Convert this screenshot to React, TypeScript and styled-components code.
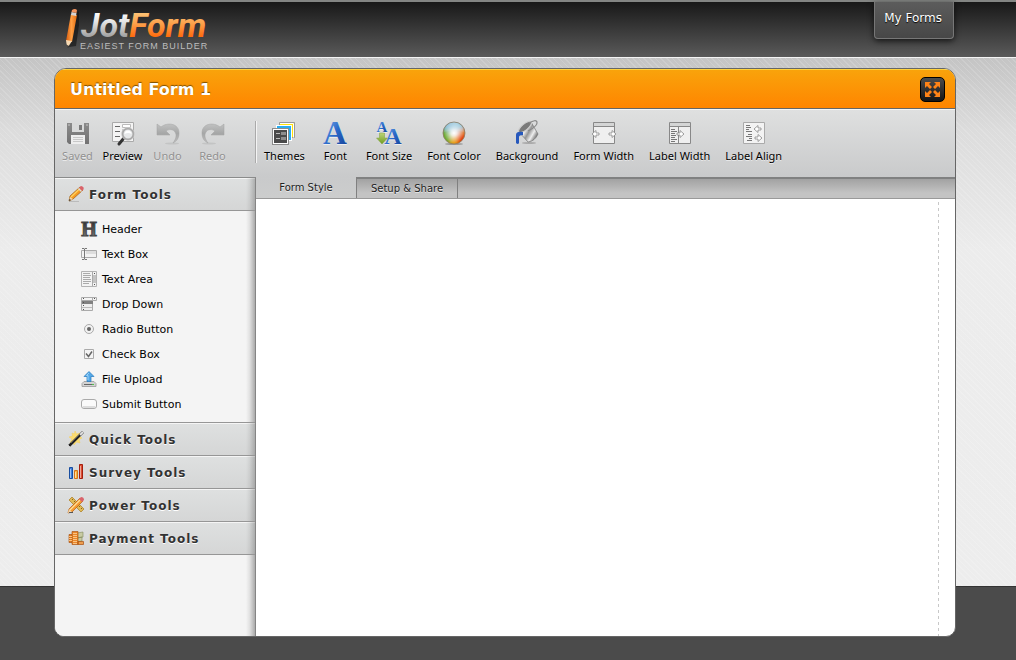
import React from "react";
import styled, { createGlobalStyle, css } from "styled-components";

const GlobalStyle = createGlobalStyle`
  *, *::before, *::after { box-sizing: border-box; }
  body {
    margin: 0;
    background: #4b4b4b;
    font-family: "DejaVu Sans", Verdana, sans-serif;
    font-size: 11px;
    color: #000;
  }
  button { font: inherit; color: inherit; border: 0; padding: 0; background: none; cursor: pointer; }
  h1, h2, ul { margin: 0; padding: 0; font: inherit; }
  ul { list-style: none; }
  svg { display: block; flex: none; overflow: visible; }
`;

const Page = styled.div`
  min-height: 100vh;
  padding-bottom: 23px;
  display: flex;
  flex-direction: column;
  background:
    linear-gradient(#333, #333) 0 calc(100% - 73px) / 100% 1px no-repeat,
    repeating-linear-gradient(45deg, rgba(255, 255, 255, 0.14) 0 1px, transparent 1px 4px) 0 0 / 100% calc(100% - 74px) no-repeat,
    linear-gradient(#c4c4c4 57px, #dcdcdc 130px, #ececec 250px, #ededed) 0 0 / 100% calc(100% - 74px) no-repeat,
    #4b4b4b;
`;

const TopBar = styled.header`
  height: 58px;
  padding: 0 62px 0 64px;
  display: flex;
  justify-content: space-between;
  align-items: flex-start;
  border-top: 2px solid #838583;
  border-bottom: 1px solid #f4f4f4;
  background: linear-gradient(#181818, #5a5a5a);
`;

const LogoLink = styled.a`
  display: block;
  padding-top: 4px;
`;

const AccountLink = styled.a`
  height: 37px;
  padding: 0 11px 5px 9px;
  display: flex;
  align-items: center;
  border: 1px solid #777;
  border-top: 0;
  border-radius: 0 0 4px 4px;
  background: linear-gradient(#5c5c5c, #474747);
  box-shadow: 0 2px 6px rgba(0, 0, 0, 0.7);
  color: #fff;
  font-size: 12px;
  line-height: 16px;
  text-decoration: none;
  text-shadow: 0 1px 1px #000;
`;

const Builder = styled.main`
  flex: 1;
  margin: 10px 60px 0 54px;
  display: flex;
  flex-direction: column;
  overflow: hidden;
  border: 1px solid #666;
  border-radius: 12px 12px 10px 10px;
  background: #fff;
`;

const TitleBar = styled.div`
  height: 40px;
  padding: 0 10px 0 15px;
  display: flex;
  align-items: center;
  justify-content: space-between;
  border-top: 1px solid #ffd23c;
  border-bottom: 1px solid #666;
  background: linear-gradient(#f9a30b, #ff8500);
`;

const FormTitle = styled.h1`
  padding-top: 2px;
  color: #fff;
  font-size: 16px;
  font-weight: bold;
  line-height: 20px;
  text-shadow: 0 -1px 1px rgba(90, 60, 0, 0.8);
`;

const ExpandButton = styled.button`
  width: 25px;
  height: 25px;
  display: grid;
  place-items: center;
  border: 1px solid #000;
  border-radius: 5px;
  background: linear-gradient(#4c4c4c, #151515);
`;

const Toolbar = styled.div`
  height: 68px;
  padding-top: 11px;
  display: flex;
  align-items: flex-start;
  border-top: 1px solid #f6f6f6;
  background: linear-gradient(#dfe0e0, #c9cacb);
`;

const ToolGroup = styled.div<{ $divided?: boolean }>`
  height: 42px;
  display: flex;
  gap: 1px;
  ${(p) =>
    p.$divided &&
    css`
      flex: none;
      width: 201px;
      gap: 0;
      margin-right: 1px;
      border-right: 1px solid #aaa;
      box-shadow: 1px 0 #f4f4f4;
    `}
`;

const ToolButton = styled.button<{ $muted?: boolean }>`
  min-width: 45px;
  padding: 0 7px;
  display: flex;
  flex-direction: column;
  align-items: center;
  gap: 3px;
  white-space: nowrap;
  font-family: "Noto Sans", "Open Sans", sans-serif;
  line-height: 15px;
  color: ${(p) => (p.$muted ? "#919191" : "#000")};
  text-shadow: 0 1px 0 rgba(255, 255, 255, 0.6);
`;

const QuickButton = styled(ToolButton)`
  width: 45px;
  padding: 0;
`;

const Workspace = styled.div`
  flex: 1;
  display: flex;
`;

const Sidebar = styled.nav`
  flex: none;
  width: 201px;
  border-top: 1px solid #8a8b8b;
  border-right: 1px solid #858585;
  background:
    linear-gradient(90deg, transparent, rgba(0, 0, 0, 0.08) 40%, rgba(0, 0, 0, 0.3)) 100% 0 / 9px 100% no-repeat,
    #f4f4f4;
`;

const SectionButton = styled.button`
  width: 100%;
  height: 33px;
  padding: 2px 13px 0;
  display: flex;
  align-items: center;
  gap: 5px;
  border-bottom: 1px solid #969696;
  background:
    linear-gradient(90deg, transparent, rgba(0, 0, 0, 0.06) 40%, rgba(0, 0, 0, 0.22)) 100% 0 / 9px 100% no-repeat,
    linear-gradient(#f5f5f5 1px, #dee0e0 1px, #d5d6d6);
  color: #333;
  font-size: 12px;
  font-weight: bold;
  line-height: 16px;
  letter-spacing: 1px;
  text-shadow: 0 1px 0 #fff;

  svg { margin-bottom: 2px; }
`;

const ToolList = styled.ul`
  padding: 6px 0 5px;
  border-bottom: 1px solid #969696;
`;

const FieldButton = styled.button`
  width: 100%;
  height: 25px;
  padding: 0 26px;
  display: flex;
  align-items: center;
  gap: 5px;
  line-height: 15px;

  svg { margin-bottom: 1px; }
`;

const Editor = styled.section`
  flex: 1;
  min-width: 0;
  display: flex;
  flex-direction: column;
`;

const TabStrip = styled.div`
  height: 22px;
  display: flex;
  background: linear-gradient(#808181 2px, #a2a2a2 2px, #c3c3c3 16px);
  border-bottom: 1px solid #999;
`;

const Tab = styled.button<{ $active?: boolean }>`
  padding: 0 13px;
  min-width: 100px;
  font-size: 10px;
  line-height: 18px;
  text-shadow: 0 1px 0 rgba(255, 255, 255, 0.6);
  color: #222;
  ${(p) =>
    p.$active
      ? css`
          background: linear-gradient(#c9cacb, #cccdcd);
        `
      : css`
          min-width: 102px;
          padding-top: 2px;
          border-left: 1px solid #808080;
          border-right: 1px solid #808080;
        `}
`;

const FormCanvas = styled.div`
  flex: 1;
  min-height: 200px;
  margin: 3px 16px 0 0;
  background: repeating-linear-gradient(#c8c8c8 0 3px, #fff 3px 6px) 100% 0 / 1px 100% no-repeat;
`;

const Logo = () => (
  <svg width="146" height="46" viewBox="64 6 146 46" role="img" aria-label="JotForm, easiest form builder">
    <defs>
      <linearGradient id="silver" gradientUnits="userSpaceOnUse" x1="0" y1="12" x2="0" y2="37">
        <stop offset="0" stopColor="#fff" />
        <stop offset="0.4" stopColor="#e4e4e4" />
        <stop offset="1" stopColor="#9f9f9f" />
      </linearGradient>
      <linearGradient id="amber" gradientUnits="userSpaceOnUse" x1="0" y1="10" x2="0" y2="37">
        <stop offset="0" stopColor="#fdcb80" />
        <stop offset="0.5" stopColor="#fba14b" />
        <stop offset="1" stopColor="#ff6a0c" />
      </linearGradient>
      <linearGradient id="pencilBody" x1="0" x2="1">
        <stop offset="0" stopColor="#d95c0d" />
        <stop offset="0.5" stopColor="#ff9f43" />
        <stop offset="1" stopColor="#e06a10" />
      </linearGradient>
    </defs>
    <path d="M75 14l4-3v14l-3 21-7 1z" fill="#111" opacity="0.6" />
    <path d="M71 14l6 1-5 27-6-1z" fill="url(#pencilBody)" />
    <path d="M71.500 12l5 1-.5 3-5-1z" fill="#d5d5d5" />
    <path d="M72 10q3-2 5 0l-.5 3-5-1z" fill="#f2955f" />
    <path d="M66 40l6 1-4 6q-2-3-2-7z" fill="#f7d9b3" />
    <path d="M67 45l2 1-1 2z" fill="#222" />
    <text x="81" y="37" fontFamily="Roboto, sans-serif" fontSize="34" fontWeight="700" fontStyle="italic">
      <tspan fill="url(#silver)">Jot</tspan><tspan fill="url(#amber)">Form</tspan>
    </text>
    <text x="80" y="49" fontFamily="Liberation Sans, sans-serif" fontSize="9" letterSpacing="1" fill="#bdbdbd">
      EASIEST FORM BUILDER
    </text>
  </svg>
);

const Big = ({ children }: { children: React.ReactNode }) => (
  <svg width="24" height="24" viewBox="0 0 24 24" aria-hidden="true">{children}</svg>
);
const Small = ({ children }: { children: React.ReactNode }) => (
  <svg width="16" height="16" viewBox="0 0 16 16" aria-hidden="true">{children}</svg>
);

const ExpandIcon = () => (
  <svg width="17" height="17" viewBox="0 0 17 17" fill="#ff8316" aria-hidden="true">
    <path d="M1 1h6L5 3l3 3-2 2-3-3-2 2z" />
    <path d="M16 1h-6l2 2-3 3 2 2 3-3 2 2z" />
    <path d="M1 16h6l-2-2 3-3-2-2-3 3-2-2z" />
    <path d="M16 16h-6l2-2-3-3 2-2 3 3 2-2z" />
  </svg>
);

const SavedIcon = () => (
  <Big>
    <defs>
      <linearGradient id="disk" x1="0" y1="0" x2="0" y2="1">
        <stop offset="0" stopColor="#8b8b8b" />
        <stop offset="1" stopColor="#727272" />
      </linearGradient>
    </defs>
    <path d="M1 2h22v21H3l-2-2z" fill="url(#disk)" />
    <path d="M6 2h12v9H6z" fill="#d9dada" />
    <path d="M13 4h3v5h-3z" fill="#7b7b7b" />
    <path d="M5 14h14v9H5z" fill="#eee" />
    <path d="M7 16.5h10M7 18.5h10M7 20.5h10" stroke="#c8c8c8" />
    <path d="M2 3h2v2H2zM20 3h2v2h-2z" fill="#a7a7a7" />
  </Big>
);

const PreviewIcon = () => (
  <Big>
    <path d="M1.5 1.5h21v19h-21z" fill="#f4f4f4" stroke="#aaa" />
    <path d="M4 5.5h5M4 10.5h5M4 15.5h5" stroke="#666" />
    <path d="M11.5 3.500h8v3h-8zM11.5 8.500h8v3h-8z" fill="#fff" stroke="#bbb" />
    <path d="M13 17l-5 6" stroke="#333" strokeWidth="3" strokeLinecap="round" />
    <circle cx="17" cy="13" r="5.5" fill="#e4e7e8" fillOpacity="0.9" stroke="#a8a8a8" strokeWidth="2" />
    <path d="M13.5 13a3.5 3.5 0 0 1 7 0q-3-2-7 0z" fill="#fff" />
    <circle cx="17" cy="13" r="6.5" fill="none" stroke="#ddd" strokeWidth="0.5" />
  </Big>
);

const CurvedArrow = ({ flip }: { flip?: boolean }) => (
  <Big>
    <defs>
      <linearGradient id="curve" x1="0" y1="0" x2="0" y2="1">
        <stop offset="0" stopColor="#c0c1c1" />
        <stop offset="0.5" stopColor="#a6a7a7" />
        <stop offset="1" stopColor="#bdbdbd" />
      </linearGradient>
    </defs>
    <g transform={flip ? "translate(24 0) scale(-1 1)" : undefined}>
      <ellipse cx="16" cy="22.5" rx="7" ry="1" fill="#c3c4c4" />
      <path d="M1 3l4 3c6-5 18-4 18 6 0 5-2 8-6 10 3-4 4-8 2-11-2-3-6-3-9-1l4 4H1z" fill="url(#curve)" stroke="#a3a3a3" strokeWidth="0.5" />
    </g>
  </Big>
);

const ThemesIcon = () => (
  <Big>
    <path d="M7.5 1.5h15v15h-15z" fill="#ffe30a" stroke="#999" />
    <path d="M8 2.5h13.5v14" fill="none" stroke="#fff" />
    <path d="M8 4h12v12" fill="none" stroke="#ffe30a" strokeWidth="2" />
    <path d="M4 4h16v16H4z" fill="#fff" />
    <path d="M5 5h14v14H5z" fill="#29adf0" />
    <path d="M0 7h17v17H0z" fill="#8c8c8c" />
    <path d="M1 8h15v15H1z" fill="#fff" />
    <path d="M2 9h13v13H2z" fill="#4a4a4a" />
    <path d="M4 12.5h4M4 17.5h4" stroke="#bbb" />
    <path d="M9 11h5v3H9zM9 16h5v3H9z" fill="#8d8d8d" />
  </Big>
);

const LETTER_A = { fontFamily: "Liberation Serif, serif", fontWeight: 700, textAnchor: "middle" as const, fill: "url(#blue)" };

const FontIcon = () => (
  <Big>
    <defs>
      <linearGradient id="blue" x1="0" y1="0" x2="1" y2="1">
        <stop offset="0" stopColor="#8bb9ef" />
        <stop offset="0.5" stopColor="#2b69c9" />
        <stop offset="1" stopColor="#123d92" />
      </linearGradient>
    </defs>
    <text x="12" y="23" fontSize="33" {...LETTER_A}>A</text>
  </Big>
);

const FontSizeIcon = () => (
  <Big>
    <defs>
      <linearGradient id="leaf" x1="0" y1="0" x2="0" y2="1">
        <stop offset="0" stopColor="#bdd477" />
        <stop offset="1" stopColor="#6f9c20" />
      </linearGradient>
    </defs>
    <text x="5" y="11" fontSize="15" {...LETTER_A}>A</text>
    <text x="16" y="23" fontSize="24" {...LETTER_A}>A</text>
    <path d="M2.500 12h5v5h3l-5.500 6-5.500-6h3z" fill="url(#leaf)" stroke="#83a23f" strokeWidth="0.5" />
  </Big>
);

const FontColorIcon = () => (
  <Big>
    <defs>
      <radialGradient id="glow">
        <stop offset="0" stopColor="#fff" />
        <stop offset="0.3" stopColor="#fff" stopOpacity="0.8" />
        <stop offset="1" stopColor="#fff" stopOpacity="0" />
      </radialGradient>
      <linearGradient id="gloss" x1="0" y1="0" x2="0" y2="1">
        <stop offset="0" stopColor="#fff" stopOpacity="0.5" />
        <stop offset="1" stopColor="#fff" stopOpacity="0.1" />
      </linearGradient>
      <filter id="blend"><feGaussianBlur stdDeviation="2" /></filter>
      <clipPath id="disc"><circle cx="12" cy="12" r="11" /></clipPath>
    </defs>
    <ellipse cx="12" cy="23" rx="9" ry="1" fill="#999" />
    <g clipPath="url(#disc)">
      <g filter="url(#blend)">
        <path d="M12 12L-4 6V-4h16z" fill="#5ea4c7" />
        <path d="M12 12V-4h16v9z" fill="#6fb2ce" />
        <path d="M12 12l16-8v12z" fill="#e08a35" />
        <path d="M12 12l16 2v14H16z" fill="#e2400b" />
        <path d="M12 12l6 16H4z" fill="#eba013" />
        <path d="M12 12L5 28h-9V6z" fill="#6eaa31" />
      </g>
    </g>
    <circle cx="12" cy="12" r="10" fill="url(#glow)" />
    <path d="M2 11a10 10 0 0 1 20 0q-10-3-20 0z" fill="url(#gloss)" />
    <circle cx="12" cy="12" r="11" fill="none" stroke="#8c7b63" strokeWidth="0.8" />
  </Big>
);

const BackgroundIcon = () => (
  <Big>
    <defs>
      <linearGradient id="metal" x1="0" y1="0" x2="1" y2="0.6">
        <stop offset="0" stopColor="#777" />
        <stop offset="0.4" stopColor="#fafafa" />
        <stop offset="0.6" stopColor="#959595" />
        <stop offset="0.8" stopColor="#eee" />
        <stop offset="1" stopColor="#777" />
      </linearGradient>
    </defs>
    <ellipse cx="14" cy="22" rx="7" ry="1" fill="#aaa" />
    <path d="M4 11L16 1l7 12q-3 7-10 8z" fill="url(#metal)" stroke="#777" strokeWidth="0.7" />
    <ellipse cx="10" cy="6" rx="8" ry="3" transform="rotate(-40 10 6)" fill="#7a7a7a" stroke="#ccc" />
    <path d="M8 11q-7-1-7 3v8q2 2 3 0v-6q0-2 4-2z" fill="#2758bc" />
    <path d="M14 2q7-4 8-1 1 4-9 9" fill="none" stroke="#888" strokeWidth="1.2" />
  </Big>
);

const Pointer = ({ place }: { place: string }) => (
  <path d="M0-1h3v-2.5L7 0 3 3.5V1H0z" transform={place} fill="#fff" stroke="#888" strokeWidth="0.8" />
);

const WindowFrame = () => (
  <>
    <path d="M1.5 1.5h21v21h-21z" fill="#efefef" stroke="#888" />
    <path d="M2 2h20v3H2z" fill="#d4d5d5" />
    <path d="M2 5.500h20" stroke="#888" />
  </>
);

const FormWidthIcon = () => (
  <Big>
    <WindowFrame />
    <Pointer place="translate(17 13)" />
    <Pointer place="translate(7 13) scale(-1 1)" />
  </Big>
);

const LabelWidthIcon = () => (
  <Big>
    <WindowFrame />
    <path d="M10.5 6v16" stroke="#888" />
    <path d="M3 8.500h4M3 10.500h6M3 12.500h4M3 14.500h5M3 16.500h4M3 18.500h6M3 20.500h4" stroke="#777" />
    <Pointer place="translate(9 13)" />
  </Big>
);

const LabelAlignIcon = () => (
  <Big>
    <path d="M1.5 1.5h21v21h-21z" fill="#f3f3f3" stroke="#aaa" />
    <path d="M4 4.500h4M4 6.500h5M4 8.500h3M4 10.500h6M6 13.500h4M4 15.500h6M7 17.500h3M5 19.500h5" stroke="#777" />
    <Pointer place="translate(19 8) scale(-1 1)" />
    <Pointer place="translate(13 17)" />
  </Big>
);

const PencilIcon = () => (
  <Small>
    <path d="M1 15.500h10" stroke="#bbb" />
    <path d="M1 15l1-5L12 1l3 3L5 13z" fill="#f59a22" stroke="#9a5b16" strokeWidth="0.7" />
    <path d="M3 11l9-8.500" stroke="#ffd25e" strokeWidth="1.3" />
    <path d="M1 15l1-4 3 2z" fill="#f4d6aa" />
    <path d="M1 15l.5-2L3 14z" fill="#222" />
    <path d="M11 2l3 3 1.5-1.5q1-2-1-3t-2.500.5z" fill="#d9636a" />
    <path d="M10.5 2.500l3 3" stroke="#ddd" strokeWidth="1.2" />
  </Small>
);

const HeaderIcon = () => (
  <Small>
    <defs>
      <linearGradient id="ink" x1="0" y1="0" x2="0" y2="1">
        <stop offset="0.2" stopColor="#333" />
        <stop offset="0.8" stopColor="#707070" />
      </linearGradient>
    </defs>
    <text x="8" y="15" textAnchor="middle" fontFamily="Liberation Serif, serif" fontSize="20" fontWeight="700" fill="url(#ink)" stroke="#444">
      H
    </text>
  </Small>
);

const TextBoxIcon = () => (
  <Small>
    <path d="M.5 4.500h15v7H.5z" fill="#f2f2f2" stroke="#aaa" />
    <path d="M5 5h10v3H5z" fill="#ddd" />
    <path d="M1 2.500h2l.5.5.5-.5h2M1 13.500h2l.5-.5.5.5h2M3.500 3v10" fill="none" stroke="#777" />
  </Small>
);

const TextAreaIcon = () => (
  <Small>
    <path d="M.5.5h15v15H.5z" fill="#f3f3f3" stroke="#b3b3b3" />
    <path d="M2 2.500h7M2 4.500h8M2 6.500h7M2 8.500h8M2 10.500h8M2 12.500h6" stroke="#aaa" />
    <path d="M11.5 1v14" stroke="#aaa" />
    <path d="M12 4h3v8h-3z" fill="#c4c4c4" />
    <path d="M13 2h1v1h-1zM13 13h1v1h-1z" fill="#555" />
  </Small>
);

const DropDownIcon = () => (
  <Small>
    <path d="M.5 1.500h15v3H.5z" fill="#f4f4f4" stroke="#aaa" />
    <path d="M11.5 1.500v3" stroke="#aaa" />
    <path d="M.5 4.500h11v10H.5z" fill="#eee" stroke="#aaa" />
    <path d="M1 5h11v3H1z" fill="#808080" />
    <path d="M1 11.500h10" stroke="#bbb" />
    <path d="M2 2h1v1H2zM2 6h1v1H2zM2 9h1v1H2zM2 13h1v1H2zM13 2h1v1h-1z" fill="#555" />
  </Small>
);

const RadioIcon = () => (
  <Small>
    <circle cx="8" cy="8" r="4.5" fill="#f2f2f2" stroke="#aaa" />
    <circle cx="8" cy="8" r="2" fill="#666" />
  </Small>
);

const CheckIcon = () => (
  <Small>
    <path d="M3.500 3.500h9v9h-9z" fill="#f4f4f4" stroke="#aaa" />
    <path d="M5 7.500l2.500 3L11 5.500" fill="none" stroke="#666" strokeWidth="1.5" />
  </Small>
);

const UploadIcon = () => (
  <Small>
    <path d="M3 10.500h10l2 2v3H1v-3z" fill="#d3d3d3" stroke="#999" strokeWidth="0.8" />
    <path d="M3 13.500h9" stroke="#666" />
    <path d="M11 13h2v1h-2z" fill="#4fc14b" />
    <path d="M8 .5l5 5h-3v5H6v-5H3z" fill="#53a8e8" stroke="#2479bd" strokeWidth="0.7" />
    <path d="M8 2L5.500 4.500H7V9" fill="none" stroke="#9bd1f6" />
  </Small>
);

const SubmitIcon = () => (
  <Small>
    <rect x="0.5" y="3.5" width="15" height="9" rx="2.5" fill="#fafafa" stroke="#aaa" />
    <path d="M2 11h12" stroke="#ddd" strokeWidth="2" />
  </Small>
);

const WandIcon = () => (
  <Small>
    <path d="M7 0l1.500 3 3.500-1-1 3 3 2-3 1.500 1 3.500-3.500-1L6 14l-1-3-3 .5L4 8 1 6l3.500-1L4 2l2.500 1z" fill="#fbdc70" stroke="#f4cf5b" strokeWidth="0.5" />
    <path d="M1 15L15 1" stroke="#222" strokeWidth="2.5" />
    <path d="M12 4l3-3" stroke="#e4e4e4" strokeWidth="2" />
    <path d="M0 14l2 2" stroke="#ccc" />
    <path d="M3 12l8-8" stroke="#888" strokeWidth="0.6" />
  </Small>
);

const ChartIcon = () => (
  <Small>
    <path d="M1.5 3.500h3v11h-3z" fill="#3f7fda" stroke="#184d9f" />
    <path d="M6.500 6.500h3v8h-3z" fill="#fcb53d" stroke="#d4731b" />
    <path d="M11.5.5h3v14h-3z" fill="#dc4e32" stroke="#a41f0f" />
    <path d="M2.500 5v9M7.500 8v6M12.5 2v12" stroke="#fff" strokeOpacity="0.5" />
  </Small>
);

const PowerIcon = () => (
  <Small>
    <path d="M1 3l3-3 12 12-3 3z" fill="#dfba58" stroke="#a97b20" strokeWidth="0.7" />
    <path d="M5 2L4 3M7 4L6 5M9 6L8 7M12 9l-1 1M14 11l-1 1" stroke="#8a651a" />
    <path d="M0 16l1-4L12 1l3 3L4 15z" fill="#f59a31" stroke="#b15d15" strokeWidth="0.7" />
    <path d="M2 13L12 3" stroke="#ffe09a" strokeWidth="1.2" />
    <path d="M11 2l3 3 2-2q0-3-3-3z" fill="#d9646b" />
    <path d="M0 16l1-4 3 3z" fill="#f3d5aa" />
    <path d="M1 15.500h4" stroke="#555" />
  </Small>
);

const PaymentIcon = () => (
  <Small>
    <path d="M9 3l6-1v5l-6 1zM9 8l5-1v4l-5 1z" fill="#c8cba3" stroke="#82895c" strokeWidth="0.6" />
    <path d="M1 4.500h4v8H1z" fill="#df7b20" stroke="#a24a0a" strokeWidth="0.6" />
    <path d="M4 1.500h6v13H4z" fill="#e9872a" stroke="#a24a0a" strokeWidth="0.6" />
    <path d="M10 11.500h5.500v3H10z" fill="#df7b20" stroke="#a24a0a" strokeWidth="0.6" />
    <path d="M1 6.500h3M1 8.500h3M1 10.500h3M5 3.500h4M5 5.500h4M5 7.500h4M5 9.500h4M5 11.500h4M5 13.500h4M11 13h4" stroke="#ffd49a" strokeWidth="0.8" />
  </Small>
);

const QUICK_ACTIONS = [
  { label: "Saved", icon: <SavedIcon />, muted: true },
  { label: "Preview", icon: <PreviewIcon />, muted: false },
  { label: "Undo", icon: <CurvedArrow />, muted: true },
  { label: "Redo", icon: <CurvedArrow flip />, muted: true },
];

const STYLE_ACTIONS = [
  { label: "Themes", icon: <ThemesIcon /> },
  { label: "Font", icon: <FontIcon /> },
  { label: "Font Size", icon: <FontSizeIcon /> },
  { label: "Font Color", icon: <FontColorIcon /> },
  { label: "Background", icon: <BackgroundIcon /> },
  { label: "Form Width", icon: <FormWidthIcon /> },
  { label: "Label Width", icon: <LabelWidthIcon /> },
  { label: "Label Align", icon: <LabelAlignIcon /> },
];

const FIELDS = [
  { label: "Header", icon: <HeaderIcon /> },
  { label: "Text Box", icon: <TextBoxIcon /> },
  { label: "Text Area", icon: <TextAreaIcon /> },
  { label: "Drop Down", icon: <DropDownIcon /> },
  { label: "Radio Button", icon: <RadioIcon /> },
  { label: "Check Box", icon: <CheckIcon /> },
  { label: "File Upload", icon: <UploadIcon /> },
  { label: "Submit Button", icon: <SubmitIcon /> },
];

const MORE_SECTIONS = [
  { label: "Quick Tools", icon: <WandIcon /> },
  { label: "Survey Tools", icon: <ChartIcon /> },
  { label: "Power Tools", icon: <PowerIcon /> },
  { label: "Payment Tools", icon: <PaymentIcon /> },
];

export default function App() {
  return (
    <Page>
      <GlobalStyle />
      <TopBar>
        <LogoLink href="#"><Logo /></LogoLink>
        <AccountLink href="#forms">My Forms</AccountLink>
      </TopBar>
      <Builder>
        <TitleBar>
          <FormTitle>Untitled Form 1</FormTitle>
          <ExpandButton type="button" aria-label="Full screen"><ExpandIcon /></ExpandButton>
        </TitleBar>
        <Toolbar>
          <ToolGroup $divided>
            {QUICK_ACTIONS.map((a) => (
              <QuickButton key={a.label} type="button" $muted={a.muted}>{a.icon}{a.label}</QuickButton>
            ))}
          </ToolGroup>
          <ToolGroup>
            {STYLE_ACTIONS.map((a) => (
              <ToolButton key={a.label} type="button">{a.icon}{a.label}</ToolButton>
            ))}
          </ToolGroup>
        </Toolbar>
        <Workspace>
          <Sidebar aria-label="Form fields">
            <h2><SectionButton type="button" aria-expanded="true"><PencilIcon />Form Tools</SectionButton></h2>
            <ToolList>
              {FIELDS.map((f) => (
                <li key={f.label}><FieldButton type="button">{f.icon}{f.label}</FieldButton></li>
              ))}
            </ToolList>
            {MORE_SECTIONS.map((s) => (
              <h2 key={s.label}><SectionButton type="button" aria-expanded="false">{s.icon}{s.label}</SectionButton></h2>
            ))}
          </Sidebar>
          <Editor>
            <TabStrip role="tablist">
              <Tab type="button" role="tab" aria-selected="true" $active>Form Style</Tab>
              <Tab type="button" role="tab" aria-selected="false">Setup &amp; Share</Tab>
            </TabStrip>
            <FormCanvas role="tabpanel" aria-label="Form Style" />
          </Editor>
        </Workspace>
      </Builder>
    </Page>
  );
}
